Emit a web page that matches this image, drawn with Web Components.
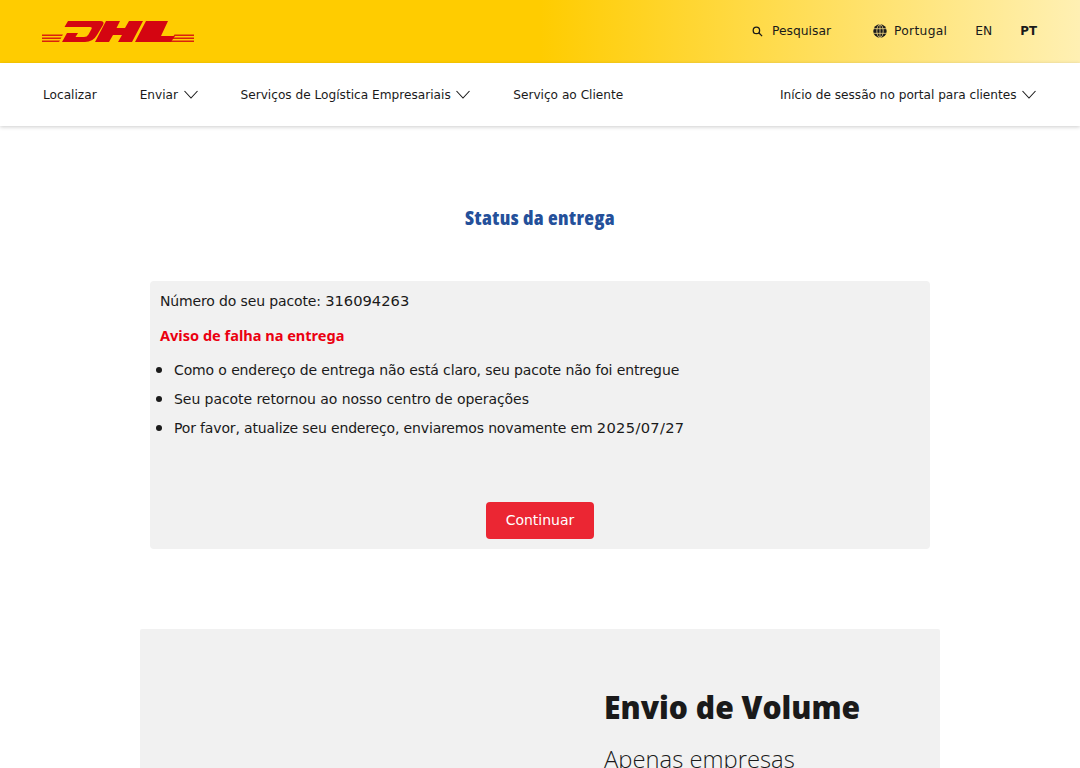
<!doctype html>
<html lang="pt">
<head>
<meta charset="utf-8">
<title>DHL</title>
<style>
  html, body { margin: 0; background: #fff; height: 768px; overflow: hidden; }
  body { font-family: "DejaVu Sans", sans-serif; color: #1a1a1a; }
  status-card li::marker { font-size: 18px; }
  status-card li span { font-size: 14.700px; letter-spacing: .3px; }
</style>
</head>
<body>
<dhl-topbar></dhl-topbar>
<dhl-nav></dhl-nav>
<status-card number="316094263">
  <li style="letter-spacing: -.125px">Como o endereço de entrega não está claro, seu pacote não foi entregue</li>
  <li style="letter-spacing: -.06px">Seu pacote retornou ao nosso centro de operações</li>
  <li style="letter-spacing: -.155px">Por favor, atualize seu endereço, enviaremos novamente em <span>2025/07/27</span></li>
</status-card>
<promo-panel></promo-panel>

<script>
const CHEVRON = `<svg width="14" height="9" viewBox="0 0 14 9" fill="none" stroke="#1a1a1a" stroke-width="1.1"><path d="M.5 1l6.500 7 6.500-7"/></svg>`

class DhlTopbar extends HTMLElement {
  constructor() {
    super()
    this.attachShadow({ mode: 'open' }).innerHTML = `
      <style>
        :host {
          display: flex; align-items: center; height: 63px; box-sizing: border-box;
          padding: 0 43px 0 42px; font-size: 12.300px; color: #1a1a1a;
          background: linear-gradient(90deg, #fc0 0%, #fc0 50%, #fff0b3 100%);
        }
        .logo { display: block; margin-top: 1px; }
        .right { margin-left: auto; display: flex; align-items: center; height: 100%; padding-bottom: 2px; box-sizing: border-box; }
        .item { display: flex; align-items: center; }
        .search { gap: 9px; margin-right: 42px; }
        .search svg { margin-top: 2px; }
        .globe { gap: 7px; margin-right: 28px; }
        .globe span { letter-spacing: .3px; }
        .en { margin-right: 28px; }
        .pt { font-weight: 700; font-size: 11.800px; }
      </style>
      <svg class="logo" width="153" height="22" viewBox="42 21 153 22" fill="#d40511">
        <path fill-rule="evenodd" d="M68 21H100Q105 21 103 25L97 35Q93 42 85 42H62L67 33H78L75.500 37H84Q87 37 88.500 34.500L91.500 29Q92.500 27 90 27H64.500Z"/>
        <path d="M106 21H120L116.500 28H125L129 21H143L132 42H118L122 35H113L109 42H95Z"/>
        <path d="M146 21H168L161 36H175L171 42H135Z"/>
        <g opacity=".85">
          <path d="M42 34.500H63L62 36H42ZM42 37.500H61.500L60.500 39H42ZM42 40.500H60L59 42H42Z"/>
          <path d="M174.500 34.500H194V36H173.500ZM173 37.500H194V39H172ZM171.500 40.500H194V42H170.500Z"/>
        </g>
      </svg>
      <div class="right">
        <div class="item search">
          <svg width="11" height="11" viewBox="0 0 12 12" fill="none" stroke="#1a1a1a" stroke-width="1.4"><circle cx="4.800" cy="4.800" r="3.500"/><path d="M7.400 7.400L11 11"/></svg>
          <span>Pesquisar</span>
        </div>
        <div class="item globe">
          <svg width="14" height="14" viewBox="0 0 15 15" fill="#1a1a1a"><circle cx="7.500" cy="7.500" r="7.200"/><g fill="none" stroke="#fde38a" stroke-width=".8"><ellipse cx="7.500" cy="7.500" rx="3.400" ry="7"/><path d="M7.500 .5v14M.5 5h14M.5 10h14"/></g></svg>
          <span>Portugal</span>
        </div>
        <span class="en">EN</span>
        <span class="pt">PT</span>
      </div>`
  }
}

class DhlNav extends HTMLElement {
  constructor() {
    super()
    this.attachShadow({ mode: 'open' }).innerHTML = `
      <style>
        :host {
          display: flex; align-items: center; height: 63px; box-sizing: border-box;
          padding: 0 44px 0 43px; font-size: 12.150px; color: #1a1a1a; background: #fff;
          box-shadow: 0 1px 4px rgba(0,0,0,.2); position: relative;
        }
        a { display: flex; align-items: center; gap: 5.500px; margin-right: 43px; }
        a:last-child { margin: 0 0 0 auto; letter-spacing: -.02px; }
      </style>
      <a>Localizar</a>
      <a>Enviar ${CHEVRON}</a>
      <a>Serviços de Logística Empresariais ${CHEVRON}</a>
      <a>Serviço ao Cliente</a>
      <a>Início de sessão no portal para clientes ${CHEVRON}</a>`
  }
}

class StatusCard extends HTMLElement {
  constructor() {
    super()
    this.attachShadow({ mode: 'open' }).innerHTML = `
      <style>
        :host { display: block; padding-top: 78px; }
        h1 {
          margin: 0 0 49px; text-align: center; color: #24509a; letter-spacing: .4px;
          font: 800 20px/28px "Open Sans", sans-serif; font-stretch: 75%;
        }
        .box {
          width: 780px; height: 268px; margin: 0 auto; box-sizing: border-box;
          padding: 9px 10px 0; background: #f1f1f1; border-radius: 4px;
          font-size: 14px; line-height: 22px; display: flex; flex-direction: column;
        }
        .num { letter-spacing: -.14px; }
        .num span { font-size: 14.700px; letter-spacing: 0; }
        .warn { margin-top: 12px; color: #eb0010; font: 700 14.550px/22px "Noto Sans", sans-serif; }
        ul { margin: 12px 0 0; padding-left: 14px; }
        ::slotted(li) { margin-bottom: 6px; }
        button {
          margin: auto auto 10px; width: 108px; height: 37px; border: 0; border-radius: 4px; padding: 0 0 2px;
          background: #eb2633; color: #fff; font: 14px "DejaVu Sans", sans-serif;
        }
      </style>
      <h1>Status da entrega</h1>
      <div class="box">
        <div class="num">Número do seu pacote: <span>${this.getAttribute('number')}</span></div>
        <div class="warn">Aviso de falha na entrega</div>
        <ul><slot></slot></ul>
        <button>Continuar</button>
      </div>`
  }
}

class PromoPanel extends HTMLElement {
  constructor() {
    super()
    this.attachShadow({ mode: 'open' }).innerHTML = `
      <style>
        :host {
          display: block; width: 800px; height: 300px; margin: 80px auto 0; box-sizing: border-box;
          background: #f1f1f1; padding: 58px 0 0 464px; border-radius: 2px;
        }
        h2 {
          margin: 0; font: 800 32px/40px "Open Sans", sans-serif; color: #1a1a1a; white-space: nowrap;
          transform: scaleX(.94); transform-origin: left;
        }
        p { margin: 15px 0 0; font: 300 23.800px/34px "Open Sans", sans-serif; color: #1a1a1a; }
      </style>
      <h2>Envio de Volume</h2>
      <p>Apenas empresas</p>`
  }
}

customElements.define('dhl-topbar', DhlTopbar)
customElements.define('dhl-nav', DhlNav)
customElements.define('status-card', StatusCard)
customElements.define('promo-panel', PromoPanel)
</script>
</body>
</html>
